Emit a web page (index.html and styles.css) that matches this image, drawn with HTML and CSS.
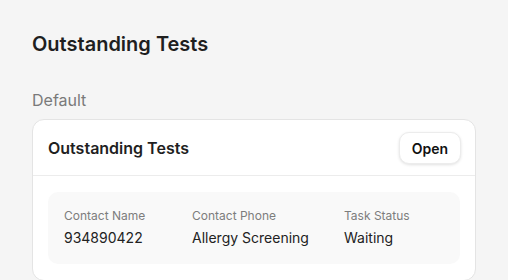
FILE: index.html
```html
<!DOCTYPE html>
<html lang="en">
  <head>
    <meta charset="UTF-8" />
    <meta name="viewport" content="width=device-width, initial-scale=1.0" />
    <title>Outstanding Tests</title>
    <link rel="stylesheet" href="styles.css">
  </head>
  <body>
    <h1 class="page-title">Outstanding Tests</h1>
    <div class="section-label">Default</div>
    <div class="card">
      <div class="card-header">
        <h2 class="card-title">Outstanding Tests</h2>
        <button class="open-button">Open</button>
      </div>
      <div class="card-body">
        <div class="details">
          <div class="field">
            <div class="field-label">Contact Name</div>
            <div class="field-value">934890422</div>
          </div>
          <div class="field">
            <div class="field-label">Contact Phone</div>
            <div class="field-value">Allergy Screening</div>
          </div>
          <div class="field">
            <div class="field-label">Task Status</div>
            <div class="field-value">Waiting</div>
          </div>
        </div>
      </div>
    </div>
  </body>
</html>
```

FILE: styles.css
```css
body {
  margin: 0;
  padding: 30px 32px 0 32px;
  background-color: #f5f5f5;
  font-family: Inter, "Liberation Sans", sans-serif;
  color: #1f1f1f;
}

.page-title {
  margin: 0;
  font-size: 20px;
  line-height: 28px;
  font-weight: 600;
}

.section-label {
  margin-top: 32px;
  margin-bottom: 9px;
  font-size: 16px;
  line-height: 20px;
  color: #7a7a7a;
}

.card {
  width: 442px;
  background-color: #fff;
  border: 1px solid #e4e4e4;
  border-radius: 12px;
}

.card-header {
  display: flex;
  justify-content: space-between;
  align-items: center;
  padding: 12px 14px 11px 15px;
  border-bottom: 1px solid #ececec;
}

.card-title {
  margin: 0;
  font-size: 16px;
  line-height: 24px;
  font-weight: 600;
}

.open-button {
  height: 32px;
  padding: 0 12px;
  font-family: inherit;
  font-size: 14px;
  font-weight: 600;
  color: #111;
  background-color: #fff;
  border: 1px solid #ececec;
  border-radius: 10px;
  box-shadow: 0 1px 3px rgba(0, 0, 0, 0.12);
}

.card-body {
  padding: 16px 15px 16px 15px;
}

.details {
  display: grid;
  grid-template-columns: 128px 152px 1fr;
  padding: 16px;
  background-color: #f9f9f9;
  border-radius: 10px;
}

.field-label {
  font-size: 12px;
  line-height: 16px;
  color: #7d7d7d;
  margin-bottom: 4px;
}

.field-value {
  font-size: 14px;
  line-height: 20px;
  color: #222;
}
```
